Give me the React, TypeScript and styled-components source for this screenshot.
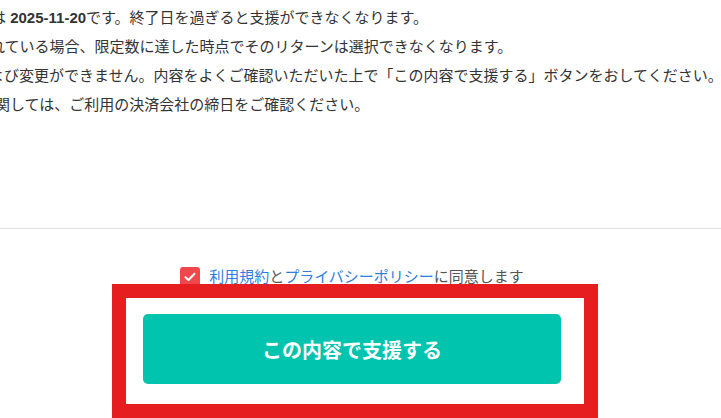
import React from "react";
import styled, { createGlobalStyle } from "styled-components";

const GlobalStyle = createGlobalStyle`
  html, body {
    margin: 0;
    padding: 0;
    background: #ffffff;
    overflow: hidden;
  }
  body {
    font-family: "Liberation Sans", "Noto Sans CJK JP", sans-serif;
    color: #333333;
  }
`;

const Page = styled.div`
  width: 721px;
  height: 418px;
  overflow: hidden;
`;

const Notes = styled.ul`
  list-style: none;
  margin: 0;
  padding: 3px 0 0;
  height: 225px;
  font-size: 15px;
  line-height: 29px;
  color: #333333;
  white-space: nowrap;
`;

const Note = styled.li<{ $shift: number }>`
  margin-left: ${(p) => p.$shift}px;
  > b {
    font-weight: 700;
  }
`;

const Footer = styled.section`
  border-top: 1px solid #e2e2e2;
  display: flex;
  flex-direction: column;
  align-items: center;
  padding: 38px 17px 0 0;
`;

const Agree = styled.label`
  display: flex;
  align-items: center;
  gap: 9px;
  font-size: 15px;
  line-height: 20px;
  color: #555555;
`;

const Check = styled.span`
  width: 20px;
  height: 20px;
  border-radius: 3px;
  background: #ee484c;
  display: flex;
  align-items: center;
  justify-content: center;
`;

const TextLink = styled.a`
  color: #2f7ee0;
  text-decoration: none;
`;

const ButtonWrap = styled.div`
  position: relative;
  margin-top: 27px;
`;

const SupportButton = styled.button`
  width: 418px;
  height: 70px;
  border: none;
  border-radius: 5px;
  background: #00c4ad;
  color: #ffffff;
  font-family: "Liberation Sans", "Noto Sans CJK JP", sans-serif;
  font-size: 20px;
  font-weight: 700;
  cursor: pointer;
`;

const Highlight = styled.div`
  position: absolute;
  left: -31px;
  top: -30px;
  right: -37px;
  bottom: -34px;
  border: 14px solid #e61e20;
  pointer-events: none;
`;

const App = () => {
  return (
    <Page>
      <GlobalStyle />
      <Notes>
        <Note $shift={-9}>
          は <b>2025-11-20</b>です。終了日を過ぎると支援ができなくなります。
        </Note>
        <Note $shift={-10}>
          れている場合、限定数に達した時点でそのリターンは選択できなくなります。
        </Note>
        <Note $shift={-11}>
          よび変更ができません。内容をよくご確認いただいた上で「この内容で支援する」ボタンをおしてください。
        </Note>
        <Note $shift={-5}>関しては、ご利用の決済会社の締日をご確認ください。</Note>
      </Notes>
      <Footer>
        <Agree>
          <Check>
            <svg width="12" height="10" viewBox="0 0 12 10">
              <path
                d="M1.5 5.2 L4.5 8 L10.5 1.8"
                fill="none"
                stroke="#ffffff"
                strokeWidth="2"
                strokeLinecap="round"
                strokeLinejoin="round"
              />
            </svg>
          </Check>
          <span>
            <TextLink href="#">利用規約</TextLink>と
            <TextLink href="#">プライバシーポリシー</TextLink>に同意します
          </span>
        </Agree>
        <ButtonWrap>
          <SupportButton>この内容で支援する</SupportButton>
          <Highlight />
        </ButtonWrap>
      </Footer>
    </Page>
  );
};

export default App;
